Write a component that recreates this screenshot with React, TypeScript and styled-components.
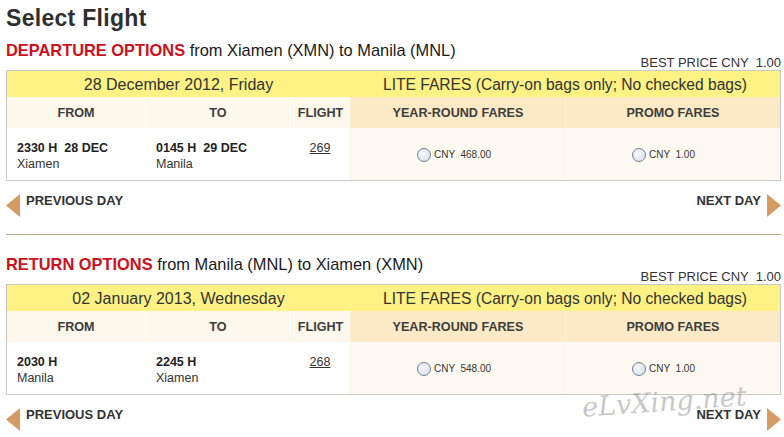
import React from "react";
import styled, { createGlobalStyle } from "styled-components";

const GlobalStyle = createGlobalStyle`
  html, body { margin: 0; padding: 0; background: #ffffff; }
  body { font-family: "Liberation Sans", Arial, sans-serif; color: #333333; }
`;

const Page = styled.div`
  position: relative;
  width: 784px;
  height: 437px;
  overflow: hidden;
  padding: 4px 3px 0 6px;
  box-sizing: border-box;
`;

const Title = styled.h1`
  margin: 0;
  font-family: "Liberation Sans", Arial, sans-serif;
  font-weight: bold;
  font-size: 23px;
  line-height: 28px;
  letter-spacing: 0.3px;
  color: #2f2f2f;
`;

const Section = styled.section<{ $first?: boolean }>`
  margin-top: ${(p) => (p.$first ? "9px" : "20px")};
`;

const Heading = styled.div`
  font-size: 16.4px;
  line-height: 18px;
  color: #1a1a1a;
`;

const Red = styled.span`
  color: #cf1020;
  font-weight: bold;
`;

const BestPrice = styled.div`
  margin-top: -4px;
  height: 15px;
  font-size: 13px;
  line-height: 15px;
  text-align: right;
  color: #333333;
  white-space: pre;
`;

const Table = styled.div`
  width: 775px;
  box-sizing: border-box;
  display: grid;
  grid-template-columns: 138px 145px 60px 215px 1fr;
  grid-template-rows: 26px 31px 52px;
  border: 1px solid #c9c9c9;
`;

const DateCell = styled.div<{ $span: string; $size: number }>`
  grid-column: ${(p) => p.$span};
  background: #fdf283;
  display: flex;
  align-items: center;
  justify-content: center;
  font-size: ${(p) => p.$size}px;
  color: #333333;
  padding-top: 1px;
`;

const HeadCell = styled.div<{ $fare?: boolean }>`
  background: ${(p) => (p.$fare ? "#fce9c6" : "#fdf8ec")};
  border-left: 1px solid ${(p) => (p.$fare ? "#fdf1dc" : "#fefcf6")};
  &:nth-child(3) { border-left: none; }
  display: flex;
  align-items: center;
  justify-content: center;
  font-size: 12.6px;
  font-weight: bold;
  color: #3d3d3d;
`;

const DataCell = styled.div<{ $align?: "left" | "center"; $pad?: number }>`
  background: #ffffff;
  padding: 12px 0 0 ${(p) => (p.$align === "center" ? 0 : p.$pad ?? 10)}px;
  text-align: ${(p) => p.$align ?? "left"};
  font-size: 12.5px;
  line-height: 16px;
`;

const Time = styled.div`
  font-weight: bold;
  color: #222222;
  white-space: pre;
`;

const City = styled.div`
  color: #333333;
`;

const FlightLink = styled.a`
  color: #333333;
  text-decoration: underline;
  font-size: 12.5px;
`;

const FareCell = styled.div`
  background: #fffaf1;
  border-left: 1px solid #fdf4e4;
  display: flex;
  align-items: center;
  padding-left: 66px;
  padding-top: 1px;
`;

const Radio = styled.span`
  width: 12px;
  height: 12px;
  border-radius: 50%;
  border: 1px solid #6f7f94;
  background: radial-gradient(circle at 40% 40%, #f6f8fb 0%, #dfe5ee 70%, #c9d2de 100%);
  margin-right: 3px;
  flex: none;
`;

const Price = styled.span`
  font-size: 10px;
  color: #333333;
  white-space: pre;
`;

const DayNav = styled.div`
  margin-top: 13px;
  height: 24px;
  display: flex;
  justify-content: space-between;
  align-items: flex-start;
`;

const NavButton = styled.a`
  display: flex;
  align-items: flex-start;
  gap: 6px;
  font-size: 13px;
  line-height: 15px;
  font-weight: bold;
  color: #333333;
  text-decoration: none;
  cursor: pointer;
  span { margin-top: -1px; }
`;

const Divider = styled.hr`
  margin: 16px 0 0 0;
  width: 775px;
  border: none;
  border-top: 1px solid #bda98c;
  height: 0;
`;

const Watermark = styled.div`
  position: absolute;
  left: 582px;
  top: 386px;
  font-family: "DejaVu Serif", serif;
  font-style: italic;
  font-size: 27px;
  color: rgba(110, 110, 110, 0.4);
  transform: rotate(-4deg);
  pointer-events: none;
`;

const Arrow = ({ dir }: { dir: "left" | "right" }) => (
  <svg width="14" height="23" viewBox="0 0 14 23">
    {dir === "left" ? (
      <polygon points="14,0 0,11.5 14,23" fill="#d59b63" />
    ) : (
      <polygon points="0,0 14,11.5 0,23" fill="#d59b63" />
    )}
  </svg>
);

type Flight = {
  date: string;
  dep: string;
  depCity: string;
  arr: string;
  arrCity: string;
  no: string;
  yearRound: string;
  promo: string;
};

const FlightSection = ({
  first,
  label,
  route,
  f,
}: {
  first?: boolean;
  label: string;
  route: string;
  f: Flight;
}) => (
  <Section $first={first}>
    <Heading>
      <Red>{label}</Red> {route}
    </Heading>
    <BestPrice>{"BEST PRICE CNY  1.00"}</BestPrice>
    <Table>
      <DateCell $span="1 / 4" $size={16}>{f.date}</DateCell>
      <DateCell $span="4 / 6" $size={15.6}>LITE FARES (Carry-on bags only; No checked bags)</DateCell>
      <HeadCell>FROM</HeadCell>
      <HeadCell>TO</HeadCell>
      <HeadCell>FLIGHT</HeadCell>
      <HeadCell $fare>YEAR-ROUND FARES</HeadCell>
      <HeadCell $fare>PROMO FARES</HeadCell>
      <DataCell $pad={10}>
        <Time>{f.dep}</Time>
        <City>{f.depCity}</City>
      </DataCell>
      <DataCell $pad={11}>
        <Time>{f.arr}</Time>
        <City>{f.arrCity}</City>
      </DataCell>
      <DataCell $align="center">
        <FlightLink>{f.no}</FlightLink>
      </DataCell>
      <FareCell>
        <Radio />
        <Price>{`CNY  ${f.yearRound}`}</Price>
      </FareCell>
      <FareCell>
        <Radio />
        <Price>{`CNY  ${f.promo}`}</Price>
      </FareCell>
    </Table>
    <DayNav>
      <NavButton>
        <Arrow dir="left" />
        <span>PREVIOUS DAY</span>
      </NavButton>
      <NavButton>
        <span>NEXT DAY</span>
        <Arrow dir="right" />
      </NavButton>
    </DayNav>
  </Section>
);

export default function App() {
  return (
    <>
      <GlobalStyle />
      <Page>
        <Title>Select Flight</Title>
        <FlightSection
          first
          label="DEPARTURE OPTIONS"
          route="from Xiamen (XMN) to Manila (MNL)"
          f={{
            date: "28 December 2012, Friday",
            dep: "2330 H  28 DEC",
            depCity: "Xiamen",
            arr: "0145 H  29 DEC",
            arrCity: "Manila",
            no: "269",
            yearRound: "468.00",
            promo: "1.00",
          }}
        />
        <Divider />
        <FlightSection
          label="RETURN OPTIONS"
          route="from Manila (MNL) to Xiamen (XMN)"
          f={{
            date: "02 January 2013, Wednesday",
            dep: "2030 H",
            depCity: "Manila",
            arr: "2245 H",
            arrCity: "Xiamen",
            no: "268",
            yearRound: "548.00",
            promo: "1.00",
          }}
        />
        <Watermark>eLvXing.net</Watermark>
      </Page>
    </>
  );
}
